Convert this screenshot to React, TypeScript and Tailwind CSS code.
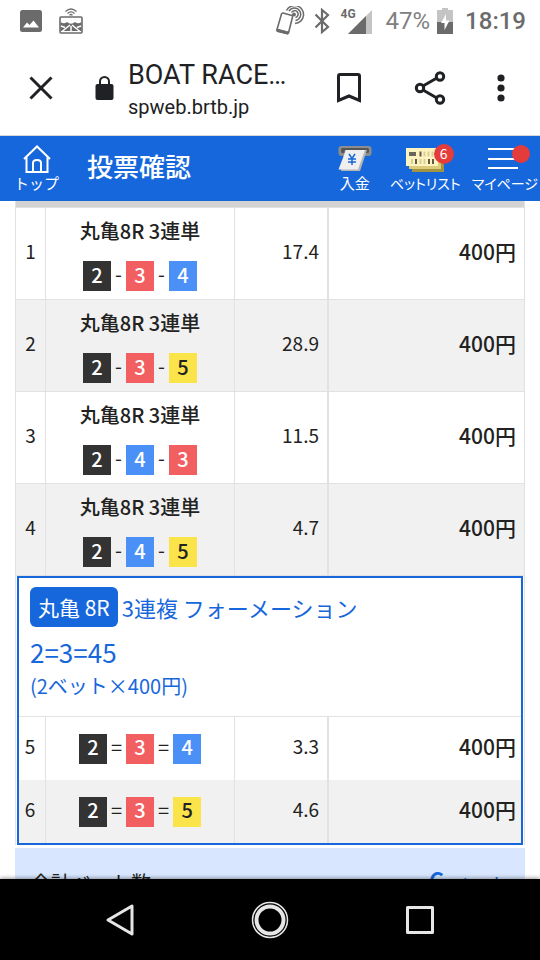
import type { ReactNode } from "react";

interface Bet {
  no: number;
  title?: string;
  boats: number[];
  odds: string;
  amount: string;
}

const trifectaBets: Bet[] = [
  { no: 1, title: "丸亀8R 3連単", boats: [2, 3, 4], odds: "17.4", amount: "400円" },
  { no: 2, title: "丸亀8R 3連単", boats: [2, 3, 5], odds: "28.9", amount: "400円" },
  { no: 3, title: "丸亀8R 3連単", boats: [2, 4, 3], odds: "11.5", amount: "400円" },
  { no: 4, title: "丸亀8R 3連単", boats: [2, 4, 5], odds: "4.7", amount: "400円" },
];

const trioBets: Bet[] = [
  { no: 5, boats: [2, 3, 4], odds: "3.3", amount: "400円" },
  { no: 6, boats: [2, 3, 5], odds: "4.6", amount: "400円" },
];

const boatColors: Record<number, string> = {
  2: "bg-[#333333] text-white",
  3: "bg-[#f25f61] text-white",
  4: "bg-[#4a90f7] text-white",
  5: "bg-[#fbe34a] text-[#222222]",
};

const StatusBar = () => (
  <div className="flex h-[42px] shrink-0 items-center justify-between pl-5 pr-[14px] text-[#6b6b6b]">
    <div className="flex items-center gap-[17px]">
      <svg className="h-[22px] w-[22px]" viewBox="0 0 22 22">
        <rect width="22" height="22" rx="2.5" fill="currentColor" />
        <path d="M3 17.500L7 12.500L9.500 15L13.500 10.500L19 17.500Z" fill="#fff" />
      </svg>
      <svg className="h-[26px] w-6" viewBox="0 0 24 26" fill="none" stroke="currentColor">
        <path d="M6.500 3.500Q12 -1.500 17.500 3.500M8.500 5.500Q12 2.200 15.500 5.500M10.500 7.200Q12 5.800 13.500 7.200" strokeWidth="1.300" />
        <rect x="1" y="9" width="22" height="16" rx="1" strokeWidth="1.600" />
        <path d="M1.500 14Q5 16.500 8 14Q12 17.500 16 14Q19 16.500 22.500 14V23H1.500Z" fill="currentColor" stroke="none" />
        <path d="M11 17L3 23.500M13 17L21 23.500M12 18V24M2 18L6 19.500M22 18L18 19.500" stroke="#fff" strokeWidth="1.500" />
      </svg>
    </div>
    <div className="flex items-center">
      <svg className="h-[30px] w-[30px]" viewBox="0 0 30 30" fill="none" stroke="currentColor">
        <path d="M8 7L17 9.500Q18 10 17.500 11L13.500 27Q13 28 12 27.500L2.500 25Q1.500 24.500 2 23.500L6.500 8Q7 6.800 8 7Z" strokeWidth="1.600" />
        <path d="M2 23L13.500 26L12.800 28L2 25.500Z" fill="currentColor" />
        <path d="M16.500 6.500A3.500 3.500 0 1 1 20.500 11.500M14 5A6.300 6.300 0 1 1 20.500 14.500M11.500 4.500A9 9 0 1 1 20 17.500" strokeWidth="1.500" />
        <circle cx="19" cy="8.500" r="1.500" fill="currentColor" />
      </svg>
      <svg className="ml-[9px] h-[26px] w-4" viewBox="0 0 16 26" fill="none" stroke="currentColor" strokeWidth="2.200">
        <path d="M1.500 6.500L14 19L8 24V2L14 7L1.500 19.500" />
      </svg>
      <div className="relative ml-[11px] h-[26px] w-[31px]">
        <span className="absolute left-0 top-0 font-[Roboto,sans-serif] text-xs leading-3 font-bold">4G</span>
        <svg className="absolute bottom-0 right-0 h-6 w-6" viewBox="0 0 24 24">
          <path d="M0 24L24 0V24Z" fill="#c4c4c4" />
          <path d="M0 24L18 6V24Z" fill="currentColor" />
        </svg>
      </div>
      <span className="ml-[14px] font-[Roboto,sans-serif] text-2xl text-[#808080]">47%</span>
      <svg className="ml-[7px] h-[26px] w-4" viewBox="0 0 16 26">
        <path d="M0 2H5V0H11V2H16V14H0Z" fill="#c4c4c4" />
        <path d="M0 14H16V26H0Z" fill="currentColor" />
        <path d="M9 6L4 15H7.500V22L12.500 12.500H9Z" fill="#fff" />
      </svg>
      <span className="ml-3 font-[Roboto,sans-serif] text-2xl font-medium">18:19</span>
    </div>
  </div>
);

const BrowserBar = () => (
  <div className="flex h-[94px] shrink-0 items-center border-b border-[#d8d8d8] pb-[2px] pl-7 pr-[30px] text-[#202124]">
    <button type="button" aria-label="閉じる">
      <svg className="h-[26px] w-[26px]" viewBox="0 0 26 26" fill="none" stroke="currentColor" strokeWidth="3">
        <path d="M2.500 2.500L23.500 23.500M23.500 2.500L2.500 23.500" />
      </svg>
    </button>
    <svg className="ml-[41px] h-6 w-[19px] shrink-0" viewBox="0 0 19 24">
      <rect x="0.500" y="8" width="18" height="16" rx="2" fill="currentColor" />
      <path d="M5 9V5.500A4.500 4.500 0 0 1 14 5.500V9" fill="none" stroke="currentColor" strokeWidth="2" />
    </svg>
    <div className="ml-[14px] min-w-0 flex-1 pt-[7px] font-[Roboto,sans-serif]">
      <p className="truncate text-[27px] leading-8">BOAT RACE…</p>
      <p className="truncate text-xl leading-8">spweb.brtb.jp</p>
    </div>
    <button type="button" aria-label="ブックマーク">
      <svg className="h-[30px] w-6" viewBox="0 0 24 30" fill="none" stroke="currentColor" strokeWidth="3">
        <path d="M1.500 27.500V3Q1.500 1.500 3 1.500H21Q22.500 1.500 22.500 3V27.500L12 23Z" />
      </svg>
    </button>
    <button type="button" aria-label="共有" className="ml-[53px]">
      <svg className="h-[34px] w-8" viewBox="0 0 32 34" fill="none" stroke="currentColor" strokeWidth="3">
        <path d="M9 15L22 7.500M9 19L22 26.500" />
        <circle cx="6" cy="17" r="3.700" />
        <circle cx="26" cy="5.500" r="3.700" />
        <circle cx="26" cy="28.500" r="3.700" />
      </svg>
    </button>
    <button type="button" aria-label="メニュー" className="ml-[46px]">
      <svg className="h-7 w-[18px]" viewBox="0 0 18 28" fill="currentColor">
        <circle cx="9" cy="4" r="3.600" />
        <circle cx="9" cy="14" r="3.600" />
        <circle cx="9" cy="24" r="3.600" />
      </svg>
    </button>
  </div>
);

interface HeaderLinkProps {
  label: string;
  labelClass?: string;
  children: ReactNode;
}

const HeaderLink = ({ label, labelClass = "text-[15px]", children }: HeaderLinkProps) => (
  <a href="#" className="flex flex-col items-center">
    <span className="flex h-7 items-center">{children}</span>
    <span className={`whitespace-nowrap leading-5 ${labelClass}`}>{label}</span>
  </a>
);

const kanaLabel = "text-sm [font-feature-settings:'palt']";

const AppHeader = () => (
  <header className="flex h-[65px] shrink-0 items-center bg-[#1767dc] pl-[14px] pr-[2px] text-white">
    <HeaderLink label="トップ">
      <svg className="h-7 w-7" viewBox="0 0 28 28" fill="none" stroke="currentColor" strokeWidth="2">
        <path d="M1 14L14 1.500L27 14M3.500 12V27H24.500V12M10 27V18Q10 15 14 15Q18 15 18 18V27" />
      </svg>
    </HeaderLink>
    <h1 className="ml-7 flex-1 pb-[5px] text-[26px] leading-10 font-medium">投票確認</h1>
    <div className="flex items-center">
      <HeaderLink label="入金">
        <svg className="h-7 w-[34px]" viewBox="0 0 34 28">
          <rect x="0.500" y="1" width="33" height="10" rx="3" fill="#8d8d8d" />
          <rect x="3" y="3" width="28" height="5" rx="1.500" fill="#555555" />
          <path d="M7 5H29L22 26H3Z" fill="#b5b5b5" />
          <path d="M8 5H27L20 24.500H0.500Z" fill="#efefef" />
          <path d="M11 9L14 13.500L17 9M10 14H18M10 17H18M14 13V20" fill="none" stroke="#1767dc" strokeWidth="1.500" />
        </svg>
      </HeaderLink>
      <div className="relative ml-[18px]">
        <HeaderLink label="ベットリスト" labelClass={kanaLabel}>
          <svg className="h-7 w-[38px]" viewBox="0 0 38 28">
            <rect x="6" y="8" width="32" height="19" fill="#a39444" />
            <rect x="3" y="6" width="32" height="18" fill="#dccb78" />
            <rect y="3" width="32" height="18" fill="#fff3bf" />
            <path d="M3 7H10V11H3Z" fill="#6b665a" />
            <path d="M14.500 6.500V11.500M10 14V19M23 14V19M27 14V19" stroke="#5f5a4a" strokeWidth="2" />
            <path d="M18.500 6.500V11.500M22.500 6.500V11.500M26.500 6.500V11.500M6 14V19M14.500 14V19M18.500 14V19" stroke="#d8cf97" strokeWidth="2" />
          </svg>
        </HeaderLink>
        <span className="absolute right-[7px] -top-px flex h-5 w-5 items-center justify-center rounded-full bg-[#e43b3b] pb-0.5 text-sm leading-5">
          6
        </span>
      </div>
      <div className="relative ml-[11px]">
        <HeaderLink label="マイページ" labelClass={kanaLabel}>
          <svg className="h-7 w-[34px]" viewBox="0 0 34 28" stroke="currentColor" strokeWidth="2">
            <path d="M0 4H30M0 14H30M0 23H30" />
          </svg>
        </HeaderLink>
        <span className="absolute right-2 top-0 h-[18px] w-[18px] rounded-full bg-[#e43b3b]" />
      </div>
    </div>
  </header>
);

const BoatNumbers = ({ boats, separator }: { boats: number[]; separator: string }) => (
  <div className="flex items-center justify-center text-xl">
    {boats.map((boat, idx) => (
      <div key={boat} className="flex items-center">
        {idx > 0 && <span className="mx-1 pb-1 leading-6">{separator}</span>}
        <span className={`flex h-[30px] w-7 items-center justify-center pb-[3px] leading-6 font-medium ${boatColors[boat]}`}>
          {boat}
        </span>
      </div>
    ))}
  </div>
);

const BetCells = ({ bet, separator }: { bet: Bet; separator: string }) => (
  <>
    <td className="border-r border-[#e2e2e2] pb-1 text-center text-[19px]">{bet.no}</td>
    <td className="border-r border-[#e2e2e2]">
      {bet.title && <p className="my-2 text-center text-xl leading-[30px] font-medium">{bet.title}</p>}
      <div className={bet.title ? "pb-2 pt-[7px]" : ""}>
        <BoatNumbers boats={bet.boats} separator={separator} />
      </div>
    </td>
    <td className="border-r-2 border-[#e2e2e2] pb-1 pr-2 text-right text-[19px]">{bet.odds}</td>
    <td className="pb-1 pr-2 text-right text-[21px] font-medium">{bet.amount}</td>
  </>
);

const BetTable = () => (
  <table className="w-full table-fixed border-separate border-spacing-0">
    <colgroup>
      <col className="w-[30px]" />
      <col className="w-[189px]" />
      <col className="w-[94px]" />
      <col />
    </colgroup>
    <tbody>
      {trifectaBets.map((bet) => (
        <tr key={bet.no} className="even:bg-[#f1f1f1] [&>td]:border-b [&>td]:border-[#e2e2e2]">
          <BetCells bet={bet} separator="-" />
        </tr>
      ))}
    </tbody>
  </table>
);

const FormationBox = () => (
  <section className="mx-px border-2 border-[#1767dc]">
    <div className="border-b border-[#e2e2e2] px-[11px] pb-[13px] pt-[9px] text-[#1767dc]">
      <div className="flex items-center gap-1 leading-10">
        <span className="rounded-md bg-[#1767dc] px-2 text-[21px] text-white">丸亀 8R</span>
        <span className="text-[22px]">3連複 フォーメーション</span>
      </div>
      <p className="mt-2 text-[26px] leading-[34px]">2=3=45</p>
      <p className="text-xl leading-[34px]">(2ベット×400円)</p>
    </div>
    <table className="w-full table-fixed border-separate border-spacing-0">
      <colgroup>
        <col className="w-[27px]" />
        <col className="w-[189px]" />
        <col className="w-[94px]" />
        <col />
      </colgroup>
      <tbody>
        {trioBets.map((bet) => (
          <tr key={bet.no} className="h-[63px] even:bg-[#f1f1f1] [&>td:first-child]:pr-1 [&>td:last-child]:pr-[5px]">
            <BetCells bet={bet} separator="=" />
          </tr>
        ))}
      </tbody>
    </table>
  </section>
);

const NavigationBar = () => (
  <nav className="flex h-[81px] shrink-0 items-center justify-center gap-[110px] bg-black text-[#e6e6e6] shadow-[0_-1px_4px_rgba(0,0,0,0.4)]">
    <button type="button" aria-label="戻る">
      <svg className="h-10 w-10" viewBox="0 0 40 40" fill="none" stroke="currentColor" strokeWidth="3" strokeLinejoin="round">
        <path d="M32 6V34L8 20Z" />
      </svg>
    </button>
    <button type="button" aria-label="ホーム">
      <svg className="h-10 w-10" viewBox="0 0 40 40" fill="none" stroke="currentColor">
        <circle cx="20" cy="20" r="17.500" strokeWidth="1.500" />
        <circle cx="20" cy="20" r="13.500" strokeWidth="4" />
      </svg>
    </button>
    <button type="button" aria-label="履歴">
      <svg className="h-10 w-10" viewBox="0 0 40 40" fill="none" stroke="currentColor" strokeWidth="3" strokeLinejoin="round">
        <rect x="7.500" y="7.500" width="25" height="25" />
      </svg>
    </button>
  </nav>
);

export default function App() {
  return (
    <div className="flex h-screen flex-col overflow-hidden bg-white font-['Noto_Sans_CJK_JP',sans-serif] text-[#222222]">
      <StatusBar />
      <BrowserBar />
      <AppHeader />
      <main className="min-h-0 flex-1 overflow-hidden px-[15px]">
        <div className="border-x border-[#e2e2e2]">
          <div className="h-[7px] border-b border-[#e2e2e2] bg-[#d3d3d3]" />
          <BetTable />
          <FormationBox />
        </div>
        <div className="mt-[3px] flex items-center justify-between bg-[#d8e7ff] px-4 py-[15px]">
          <span className="text-xl leading-9">合計ベット数</span>
          <span className="text-xl leading-9 text-[#1767dc]">
            <span className="text-[28px] font-medium">6</span> ベット
          </span>
        </div>
      </main>
      <NavigationBar />
    </div>
  );
}
